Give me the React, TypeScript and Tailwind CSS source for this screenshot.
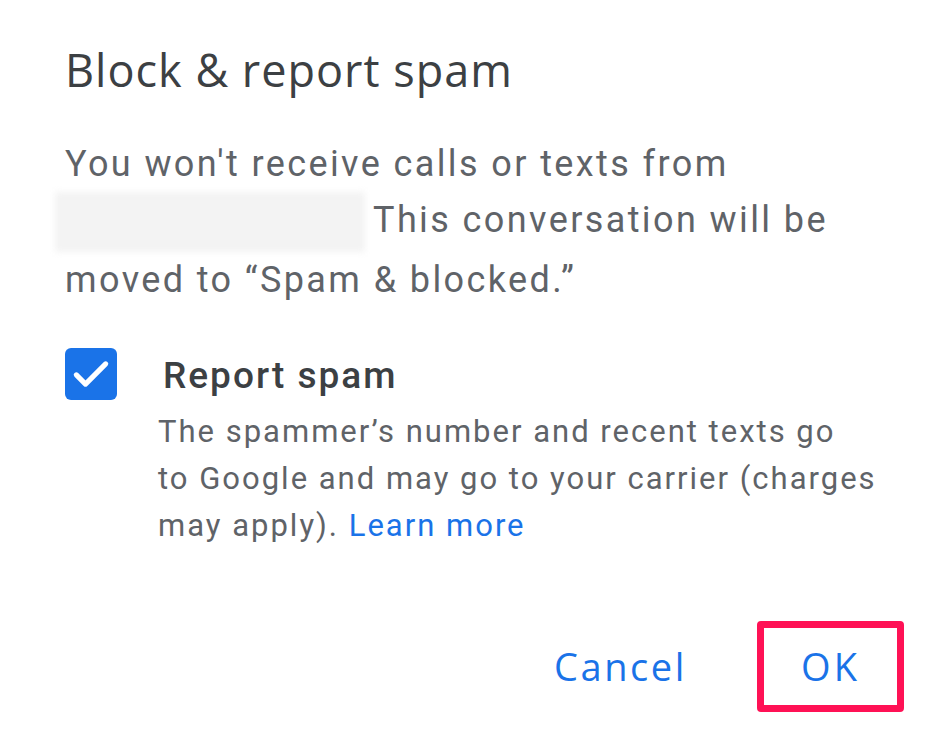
export default function App() {
  return (
    <div className="w-[936px] h-[739px] bg-white overflow-hidden relative" style={{ fontFamily: "Roboto, 'Liberation Sans', sans-serif" }}>
      <div className="pl-[65px] pr-[40px] pt-[42px]">
        <h1 className="text-[45px] leading-[56px] text-[#3c4043] font-['Open_Sans',sans-serif] tracking-[1px]">
          Block &amp; report spam
        </h1>
        <p className="mt-[38px] text-[36px] leading-[56px] text-[#5f6368] tracking-[2.4px]">
          You won't receive calls or texts from
          <br />
          <span className="inline-block w-[310px] h-[60px] align-middle -ml-[10px] mr-[8px] bg-[#f3f3f3] blur-[3px]" />
          This conversation will be
          <br />
          moved to “Spam &amp; blocked.”
        </p>
        <div className="mt-[38px] flex gap-[46px]">
          <div className="w-[52px] h-[52px] mt-[2px] rounded-[6px] bg-[#1a73e8] flex items-center justify-center shrink-0">
            <svg width="44" height="44" viewBox="0 0 24 24" fill="none" stroke="white" strokeWidth="2.8" strokeLinecap="round" strokeLinejoin="round">
              <path d="M4 12.5l5 5L20 6.5" />
            </svg>
          </div>
          <div>
            <div className="text-[37px] leading-[56px] mt-[2px] text-[#3c4043] font-medium tracking-[2px]">Report spam</div>
            <p className="-ml-[5px] mt-[4px] text-[31px] leading-[47px] text-[#5f6368] w-[760px] tracking-[2px]">
              The spammer’s number and recent texts go
              <br />
              to Google and may go to your carrier (charges
              <br />
              may apply). <span className="text-[#1a73e8]">Learn more</span>
            </p>
          </div>
        </div>
      </div>
      <div className="absolute left-0 right-0 top-[621px] flex justify-end items-center pr-[32px] gap-[70px]">
        <button className="text-[38px] text-[#1a73e8] font-['Open_Sans',sans-serif] tracking-[2.6px]">Cancel</button>
        <button className="w-[147px] h-[91px] border-[7px] border-[#ff1155] rounded-[4px] text-[38px] text-[#1a73e8] font-['Open_Sans',sans-serif] tracking-[3px]">
          OK
        </button>
      </div>
    </div>
  );
}
